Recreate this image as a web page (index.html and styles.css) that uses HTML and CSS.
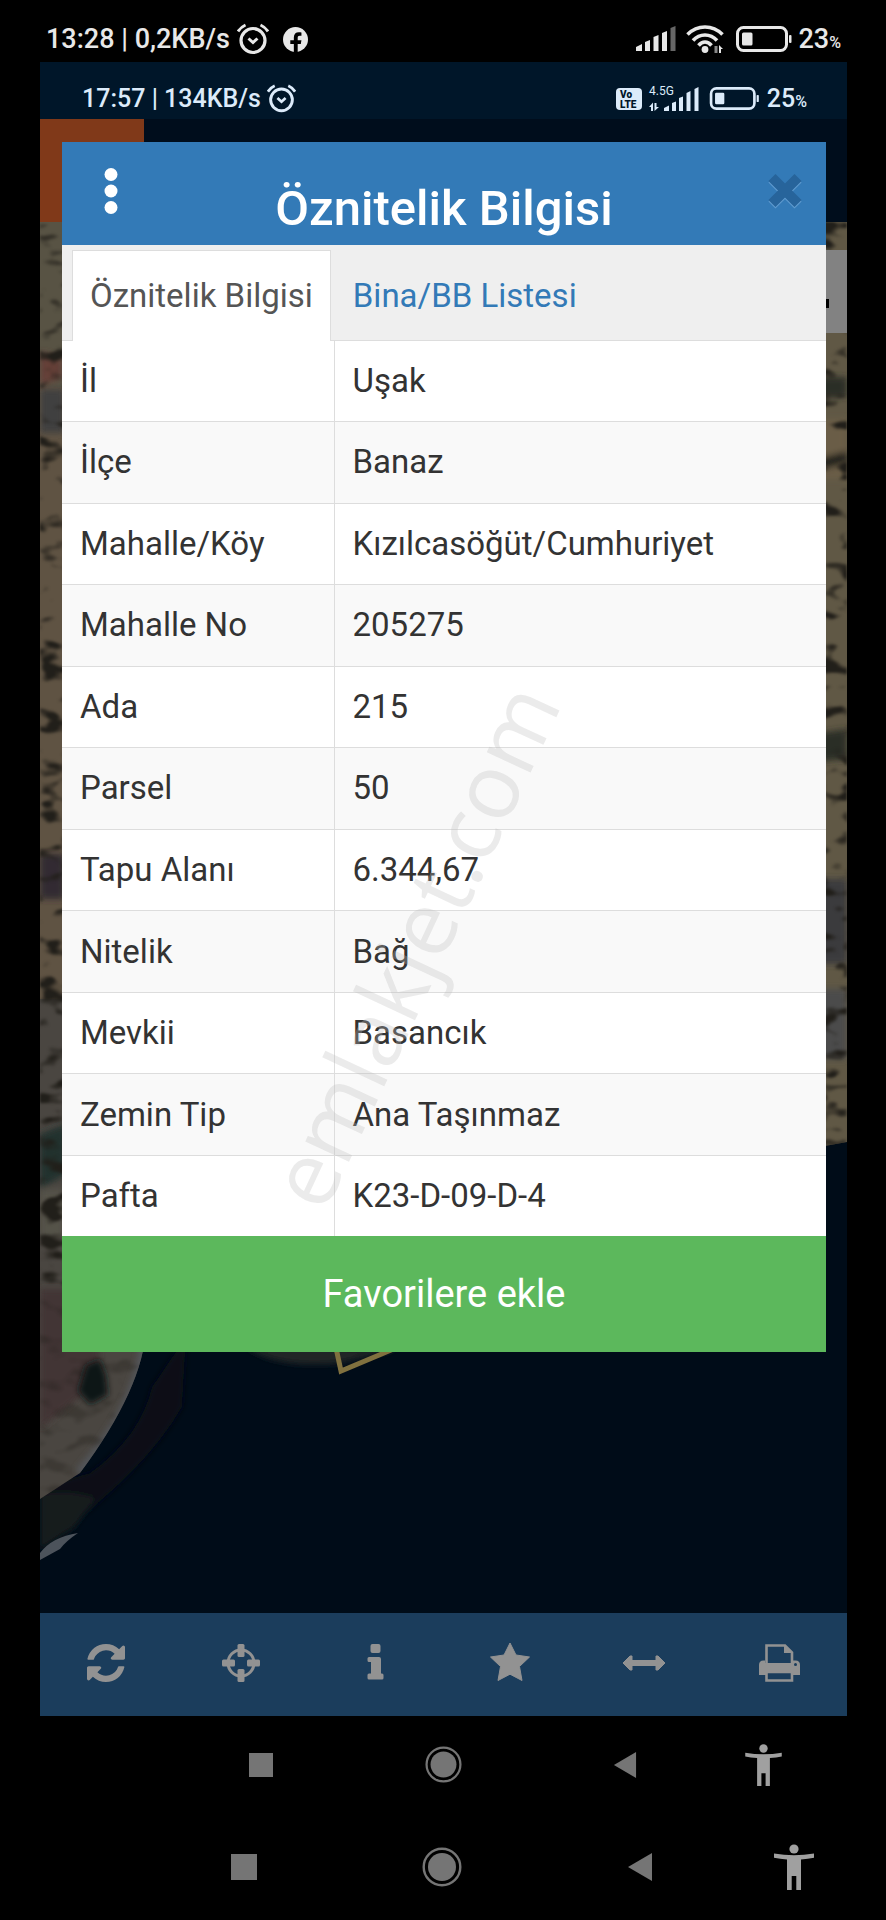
FILE: index.html
```html
<!DOCTYPE html>
<html lang="tr">
<head>
<meta charset="utf-8">
<meta name="viewport" content="width=device-width, initial-scale=1">
<title>Öznitelik Bilgisi</title>
<link rel="stylesheet" href="styles.css">
</head>
<body>
<svg class="defs" aria-hidden="true">
  <symbol id="alarm" viewBox="0 0 32 32"><g fill="none" stroke="currentColor"><circle cx="16" cy="17.500" r="12" stroke-width="3.200"/><path d="M11.500 15.500l4.500 4 4.500-4" stroke-width="3"/><path d="M1 8.500Q4 4 8.500 2M31 8.500Q28 4 23.500 2" stroke-width="3"/></g></symbol>
  <symbol id="battery" viewBox="0 0 56 26"><rect x="1.500" y="1.500" width="49" height="23" rx="6" fill="none" stroke="currentColor" stroke-width="3"/><rect x="6" y="6.500" width="10.500" height="13" rx="1.500" fill="currentColor"/><rect x="53" y="9" width="2.500" height="8" rx="1" fill="currentColor"/></symbol>
  <symbol id="nav-home" viewBox="0 0 40 40"><circle cx="20" cy="20" r="18.300" fill="none" stroke="currentColor" stroke-width="2.400"/><circle cx="20" cy="20" r="14" fill="currentColor"/></symbol>
  <symbol id="nav-back" viewBox="0 0 26 30"><path d="M25 1v28L1 15z" fill="currentColor"/></symbol>
  <symbol id="nav-person" viewBox="0 0 40 46"><g fill="currentColor"><circle cx="20" cy="5" r="4.600"/><path d="M0 9.500q10 1.800 20 1.800t20-1.800v4.200q-6 1.200-13 1.700V46h-4.700V32h-4.600v14H13V15.400Q6 15 0 13.700z"/></g></symbol>
</svg>

<header class="status status-outer">
  <div class="status-side">
    <span>13:28 | 0,2KB/s</span>
    <svg class="ic-alarm" aria-hidden="true"><use href="#alarm"/></svg>
    <svg class="ic-fb" viewBox="0 0 24 24" aria-hidden="true"><circle cx="12" cy="12" r="12" fill="currentColor"/><path d="M10.400 25v-8.800H7v-3.400h3.400v-2.700c0-3.300 1.900-5.100 4.700-5.100 1 0 2 .2 2.600.3v3h-1.600c-1.500 0-2 .9-2 1.900v2.600h3.600l-.6 3.400h-3V25z" fill="#000"/></svg>
  </div>
  <div class="status-side">
    <svg class="ic-signal" viewBox="0 0 40 26" aria-hidden="true"><path d="M0 25v-4l6-3v7zM9 25V16l5-2v11zM17.500 25V11l5-2v16zM26 25V7l5-2v20z" fill="currentColor"/><path d="M34.500 25V2l5-2v25z" fill="#666"/></svg>
    <svg class="ic-wifi" viewBox="0 0 38 30" aria-hidden="true"><g fill="none" stroke="currentColor" stroke-width="3.600"><path d="M1.500 10.500Q9 3 19 3t17.500 7.500"/><path d="M7 16.500Q12 11 19 11t12 5.500"/><path d="M12.500 21.500q3-3.500 6.500-3.500t6.500 3.500"/></g><circle cx="19" cy="25.500" r="3.400" fill="currentColor"/><path d="M30 29V22" stroke="#888" stroke-width="3"/><path d="M33 29v-8l4 4h-2v4z" fill="currentColor"/></svg>
    <svg class="ic-battery" aria-hidden="true"><use href="#battery"/></svg>
    <span>23<small>%</small></span>
  </div>
</header>

<main class="phone">
  <div class="status status-inner">
    <div class="status-side">
      <span>17:57 | 134KB/s</span>
      <svg class="ic-alarm" aria-hidden="true"><use href="#alarm"/></svg>
    </div>
    <div class="status-side">
      <svg class="ic-volte" viewBox="0 0 26 22" aria-hidden="true"><rect width="26" height="22" rx="4" fill="currentColor"/><text x="4" y="10">Vo</text><text x="4" y="20">LTE</text></svg>
      <svg class="ic-cell" viewBox="0 0 50 26" aria-hidden="true"><text x="0" y="9">4.5G</text><g fill="currentColor"><path d="M0 21l4-4.500V25H2v-4zM5.500 17h2v4H10l-4.500 4zM15 25v-3l5-2.500V25zM23 25v-8l4-1.500V25zM30 25V12l4-1.500V25zM37.500 25V7l4-2v20zM45.500 25V3l4-2v24z"/></g></svg>
      <svg class="ic-battery" aria-hidden="true"><use href="#battery"/></svg>
      <span>25<small>%</small></span>
    </div>
  </div>

  <div class="stage">
    <svg class="map" viewBox="0 0 807 1494" preserveAspectRatio="none" aria-hidden="true">
      <defs>
        <filter id="soft" x="-20%" y="-20%" width="140%" height="140%"><feGaussianBlur stdDeviation="3"/></filter>
        <filter id="spots" x="0" y="0" width="100%" height="100%" color-interpolation-filters="sRGB"><feTurbulence type="fractalNoise" baseFrequency="0.04 0.07" numOctaves="2" seed="8"/><feColorMatrix values="0 0 0 0 0.130  0 0 0 0 0.120  0 0 0 0 0.100  5 2 0 0 -3.700"/><feGaussianBlur stdDeviation="1"/></filter>
        <clipPath id="land"><path d="M0 103H60V1080l46 128q-2 60-66 146L0 1380zM740 103h67v920l-67 12z"/></clipPath>
      </defs>
      <rect width="807" height="1494" fill="#000c18"/>
      <rect width="807" height="103" fill="#000d1c"/>
      <g filter="url(#soft)">
        <path d="M50 1354q50-36 62-86l34-50-4 70q-40 70-142 140v-60z" fill="#080c17"/>
        <path d="M0 1375q30-5 56 4l-22 30-34 22z" fill="#151c1e"/>
        <path d="M206 1228q30 22 94 16l60-14z" fill="#242725"/>
      </g>
      <path d="M0 1434q12-16 38-20-12 8-18 16l-20 11z" fill="#4c535b"/>
      <g clip-path="url(#land)">
        <rect y="103" width="120" height="820" fill="#5f5343"/>
        <rect y="103" width="30" height="165" fill="#585344"/>
        <rect y="880" width="120" height="520" fill="#4a4641"/>
        <rect x="740" y="103" width="67" height="950" fill="#605845"/>
        <g filter="url(#soft)">
          <path d="M0 233l22 6v20l-22 8z" fill="#653f39"/>
          <path d="M0 270h24v44H0z" fill="#3f403f"/>
          <path d="M0 735h24v45H0z" fill="#302c30"/>
          <path d="M0 1015l26-10v50L0 1070z" fill="#23302e"/>
          <path d="M0 1070h24v50H0z" fill="#54524a"/>
          <path d="M740 300h67v60h-67z" fill="#6b5d46"/>
          <path d="M740 258h67v20h-67zM740 620l67-10v30l-67 6z" fill="#2b2f27"/>
          <path d="M740 350l67-18v12l-67 18z" fill="#24231f"/>
          <path d="M740 760h67v85h-67z" fill="#3b3a3e"/>
          <path d="M740 870h67v70h-67z" fill="#4b4c4b"/>
          <path d="M0 1170h50q20 50 0 100l-50 40z" fill="#423534"/>
          <path d="M106 1190v30q-8 70-66 134" fill="none" stroke="#53575c" stroke-width="10"/>
        </g>
        <rect y="103" width="807" height="1070" filter="url(#spots)"/>
        <rect y="1173" width="120" height="220" filter="url(#spots)" opacity="0.3"/>
        <path d="M38 1272l8-26 14-6 6 16 2 20-18 10z" fill="#101817" filter="url(#soft)"/>
      </g>
      <path d="M293 1215l8 37 62-26" fill="none" stroke="#80713f" stroke-width="5"/>
      <rect x="740" y="131" width="67" height="83" fill="#828282"/>
      <rect x="784" y="180" width="5" height="9" fill="#000"/>
      <rect width="104" height="103" fill="#803919"/>
    </svg>

    <section class="dialog" aria-labelledby="dialog-title">
      <header class="dialog-head">
        <button class="icon-btn" type="button" aria-label="Menü"><svg class="ic-dots" viewBox="0 0 14 46" aria-hidden="true"><g fill="#fff"><circle cx="7" cy="6.500" r="6.500"/><circle cx="7" cy="23" r="6.500"/><circle cx="7" cy="39.500" r="6.500"/></g></svg></button>
        <h1 id="dialog-title">Öznitelik Bilgisi</h1>
        <button class="icon-btn icon-btn-close" type="button" aria-label="Kapat"><svg class="ic-close" viewBox="0 0 34 36" aria-hidden="true"><path d="M7.500 9.500l19 19M26.500 9.500l-19 19" stroke="#5f9bd0" stroke-width="10" stroke-linecap="square"/><path d="M7.500 8l19 19M26.500 8l-19 19" stroke="#27649b" stroke-width="10" stroke-linecap="square"/></svg></button>
      </header>
      <nav class="tabs">
        <a class="tab tab-active" href="#bilgi" aria-current="page">Öznitelik Bilgisi</a>
        <a class="tab" href="#liste">Bina/BB Listesi</a>
      </nav>
      <table class="attrs">
        <tbody>
          <tr><th scope="row">İl</th><td>Uşak</td></tr>
          <tr><th scope="row">İlçe</th><td>Banaz</td></tr>
          <tr><th scope="row">Mahalle/Köy</th><td>Kızılcasöğüt/Cumhuriyet</td></tr>
          <tr><th scope="row">Mahalle No</th><td>205275</td></tr>
          <tr><th scope="row">Ada</th><td>215</td></tr>
          <tr><th scope="row">Parsel</th><td>50</td></tr>
          <tr><th scope="row">Tapu Alanı</th><td>6.344,67</td></tr>
          <tr><th scope="row">Nitelik</th><td>Bağ</td></tr>
          <tr><th scope="row">Mevkii</th><td>Basancık</td></tr>
          <tr><th scope="row">Zemin Tip</th><td>Ana Taşınmaz</td></tr>
          <tr><th scope="row">Pafta</th><td>K23-D-09-D-4</td></tr>
        </tbody>
      </table>
      <button class="favorite" type="button">Favorilere ekle</button>
      <div class="watermark">emlakjet.com</div>
    </section>
  </div>

  <nav class="toolbar">
    <button type="button" aria-label="Yenile"><svg viewBox="0 0 1536 1536" aria-hidden="true"><path fill="currentColor" d="M1511 928q0 5-1 7-64 268-268 434.500t-478 166.500q-146 0-282.500-55t-243.500-157l-129 129q-19 19-45 19t-45-19-19-45v-448q0-26 19-45t45-19h448q26 0 45 19t19 45-19 45l-137 137q71 66 161 102t187 36q134 0 250-65t186-179q11-17 53-117 8-23 30-23h192q13 0 22.500 9.500t9.500 22.500zm25-800v448q0 26-19 45t-45 19h-448q-26 0-45-19t-19-45 19-45l138-138q-148-137-349-137-134 0-250 65t-186 179q-11 17-53 117-8 23-30 23h-199q-13 0-22.500-9.500t-9.500-22.500v-7q65-268 270-434.500t480-166.500q146 0 284 55.500t245 156.500l130-129q19-19 45-19t45 19 19 45z"/></svg></button>
    <button type="button" aria-label="Konum"><svg viewBox="0 0 38 38" aria-hidden="true"><circle cx="19" cy="19" r="13" fill="none" stroke="currentColor" stroke-width="3"/><g fill="currentColor"><rect x="15.500" y="0" width="7" height="13" rx="1.500"/><rect x="15.500" y="25" width="7" height="13" rx="1.500"/><rect x="0" y="15.500" width="13" height="7" rx="1.500"/><rect x="25" y="15.500" width="13" height="7" rx="1.500"/></g></svg></button>
    <button type="button" aria-label="Bilgi"><svg viewBox="0 0 38 38" aria-hidden="true"><g fill="currentColor"><rect x="14.500" y="0" width="10" height="9" rx="2"/><path d="M13 13h10q2 0 2 2v14.500h1q1.500 0 1.500 1.500v3q0 1.500-1.500 1.500H13q-1.500 0-1.500-1.500v-3q0-1.500 1.500-1.500h2V18h-2q-1.500 0-1.500-1.500v-2Q11.500 13 13 13z"/></g></svg></button>
    <button type="button" aria-label="Favoriler"><svg viewBox="0 0 38 38" aria-hidden="true"><path fill="currentColor" stroke="currentColor" stroke-linejoin="round" d="M19-1l6 12 13.500 2-10 9.500L31 36.500 19 30.200 7 36.500l2.500-14-10-9.500L13 11z"/></svg></button>
    <button type="button" aria-label="Ölç"><svg viewBox="0 0 38 38" aria-hidden="true"><path fill="currentColor" stroke="currentColor" stroke-linejoin="round" d="M-2 19l7-7h2v4.500h24V12h2l7 7-7 7h-2v-4.500H7V26H5z"/></svg></button>
    <button type="button" aria-label="Yazdır"><svg viewBox="0 0 38 38" aria-hidden="true"><g fill="none" stroke="currentColor" stroke-width="2.600"><path d="M6.500 20V1.500H25l7 7V20"/><path d="M6.500 28v8.500H32V28z"/></g><path d="M24 1.500l8.500 7.500H24z" fill="currentColor"/><path d="M-1 31V21q0-4.500 4.500-4.500H5V19h28v-2.500h2.500Q40 16.500 40 21v10h-7v-3H6v3z" fill="currentColor"/><circle cx="35.500" cy="20.500" r="1.500" fill="#1b3d5c"/></svg></button>
  </nav>
</main>

<nav class="sysnav sysnav-inner">
  <button type="button" aria-label="Son uygulamalar"><span class="nav-square"></span></button>
  <button type="button" aria-label="Ana ekran"><svg class="nav-home" aria-hidden="true"><use href="#nav-home"/></svg></button>
  <button type="button" aria-label="Geri"><svg class="nav-back" aria-hidden="true"><use href="#nav-back"/></svg></button>
  <button type="button" aria-label="Erişilebilirlik"><svg class="nav-person" aria-hidden="true"><use href="#nav-person"/></svg></button>
</nav>
<nav class="sysnav sysnav-outer">
  <button type="button" aria-label="Son uygulamalar"><span class="nav-square"></span></button>
  <button type="button" aria-label="Ana ekran"><svg class="nav-home" aria-hidden="true"><use href="#nav-home"/></svg></button>
  <button type="button" aria-label="Geri"><svg class="nav-back" aria-hidden="true"><use href="#nav-back"/></svg></button>
  <button type="button" aria-label="Erişilebilirlik"><svg class="nav-person" aria-hidden="true"><use href="#nav-person"/></svg></button>
</nav>
</body>
</html>
```
FILE: styles.css
```css
* { box-sizing: border-box; }
body {
  margin: 0;
  background: #000;
  color: #333;
  font-family: Roboto, "Noto Sans", sans-serif;
}
button {
  margin: 0;
  padding: 0;
  border: 0;
  background: none;
  color: inherit;
  font: inherit;
}
svg { display: block; overflow: visible; }
.defs { position: absolute; width: 0; height: 0; }

/* status bars */
.status {
  display: flex;
  justify-content: space-between;
  align-items: center;
  font-weight: 500;
}
.status-side { display: flex; align-items: center; }
.status-outer {
  height: 62px;
  padding: 16px 45px 0 46px;
  color: #e8e8e8;
  font-size: 27px;
}
.status-inner {
  height: 57px;
  padding: 16px 40px 0 42px;
  background: #001629;
  color: #dcebfa;
  font-size: 25px;
}
.status small { font-size: 16px; }
.status-outer .ic-alarm { width: 32px; height: 32px; margin-left: 7px; }
.status-inner .ic-alarm { width: 29px; height: 29px; margin-left: 6px; }
.ic-fb { width: 25px; height: 25px; margin-left: 14px; }
.ic-signal { width: 40px; height: 26px; margin-right: 10px; }
.ic-wifi { width: 38px; height: 30px; margin-right: 12px; }
.status-outer .ic-battery { width: 56px; height: 26px; margin-right: 7px; }
.status-inner .ic-battery { width: 51px; height: 23px; margin-right: 7px; }
.ic-volte { width: 26px; height: 22px; margin-right: 7px; }
.ic-volte text { font-size: 10px; font-weight: 900; fill: #001629; }
.ic-cell { width: 50px; height: 26px; margin-right: 10px; }
.ic-cell text { font-size: 12px; font-weight: 400; fill: currentColor; }

/* captured phone screen */
.phone { margin: 0 39px 0 40px; }
.stage { position: relative; padding: 23px 21px 261px 22px; }
.map { position: absolute; inset: 0; width: 100%; height: 100%; overflow: hidden; }

/* attribute dialog */
.dialog { position: relative; background: #fff; }
.dialog-head {
  display: grid;
  grid-template-columns: 98px 1fr 98px;
  height: 103px;
  background: #337ab7;
}
.dialog-head h1 {
  margin: 0;
  padding-top: 37px;
  color: #fff;
  font-size: 49px;
  font-weight: 500;
  line-height: 60px;
  text-align: center;
}
.icon-btn { display: grid; place-items: center; height: 98px; }
.icon-btn-close { justify-self: end; width: 82px; }
.ic-dots { width: 14px; height: 46px; }
.ic-close { width: 34px; height: 36px; }
.tabs {
  display: flex;
  padding: 5px 10px 0;
  border-bottom: 1px solid #ddd;
  background: #efefef;
}
.tab {
  padding: 24px 17px 23px;
  border: 1px solid transparent;
  border-bottom: 0;
  color: #337ab7;
  font-size: 33px;
  line-height: 42px;
  text-decoration: none;
}
.tab-active {
  margin-right: 4px;
  margin-bottom: -1px;
  padding-bottom: 24px;
  border-color: #ddd;
  background: #fff;
  color: #555;
}
.attrs {
  width: 100%;
  height: 895px;
  border-collapse: collapse;
  table-layout: fixed;
  font-size: 33px;
  line-height: 40px;
}
.attrs tr { border-bottom: 1px solid #ddd; }
.attrs tr:nth-child(even) { background: #f9f9f9; }
.attrs tr:last-child { border-bottom: 0; }
.attrs th,
.attrs td { padding: 0 18px; font-weight: 400; text-align: left; }
.attrs th { width: 272px; border-right: 1px solid #ddd; }
.favorite {
  display: block;
  width: 100%;
  height: 116px;
  background: #5cb85c;
  color: #fff;
  font-size: 38px;
}
.watermark {
  position: absolute;
  top: 749px;
  left: 69px;
  width: 560px;
  color: rgba(190, 190, 190, 0.3);
  font-family: "Open Sans", sans-serif;
  font-size: 90px;
  line-height: 110px;
  text-align: center;
  transform: rotate(-65deg);
  pointer-events: none;
}

/* map toolbar */
.toolbar {
  display: grid;
  grid-template-columns: repeat(6, 1fr);
  height: 103px;
  background: #1b3d5c;
  color: #929292;
}
.toolbar button { display: grid; place-items: center; padding: 0 2px 4px 0; }
.toolbar svg { width: 38px; height: 38px; }

/* system navigation */
.sysnav { display: grid; color: #757575; }
.sysnav button { display: grid; place-items: center; }
.sysnav-inner {
  grid-template-columns: repeat(3, 1fr) 94px;
  height: 97px;
  padding: 0 76px 0 170px;
}
.sysnav-outer {
  grid-template-columns: repeat(3, 1fr) 110px;
  height: 107px;
  padding: 0 37px 0 145px;
}
.nav-square { width: 24px; height: 24px; background: currentColor; }
.nav-home { width: 37px; height: 37px; }
.nav-back { width: 24px; height: 28px; }
.nav-person { width: 37px; height: 42px; color: #a0a0a0; }
.sysnav-outer .nav-square { width: 26px; height: 26px; }
.sysnav-outer .nav-home { width: 40px; height: 40px; }
.sysnav-outer .nav-back { width: 26px; height: 30px; }
.sysnav-outer .nav-person { width: 40px; height: 46px; }
```
